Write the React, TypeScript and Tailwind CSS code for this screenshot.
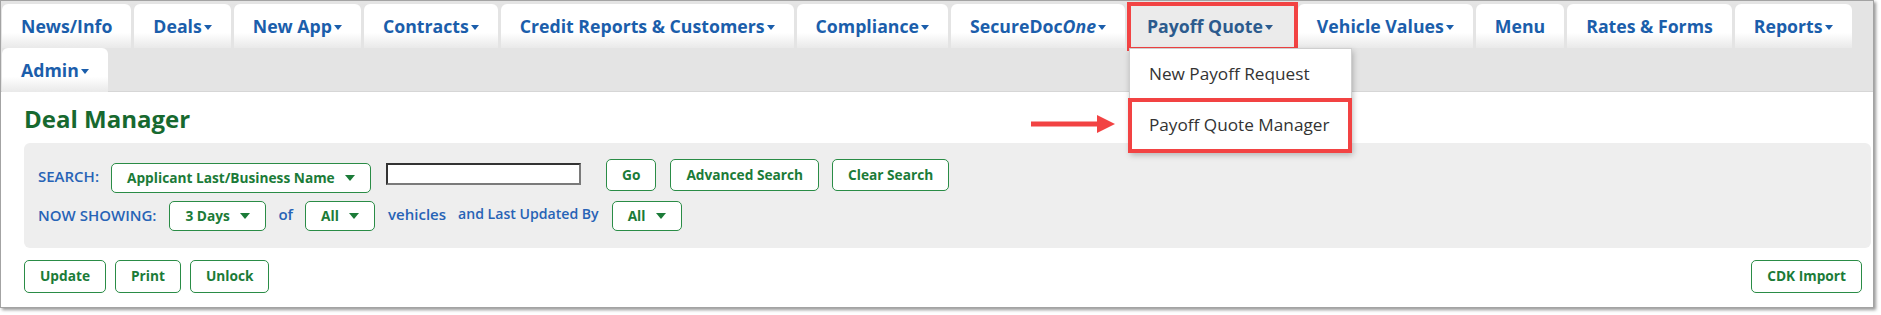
import React from 'react';

type Tab = {
  label: string;
  italic?: string;
  caret?: boolean;
  active?: boolean;
};

const tabs: Tab[] = [
  { label: 'News/Info' },
  { label: 'Deals', caret: true },
  { label: 'New App', caret: true },
  { label: 'Contracts', caret: true },
  { label: 'Credit Reports & Customers', caret: true },
  { label: 'Compliance', caret: true },
  { label: 'SecureDoc', italic: 'One', caret: true },
  { label: 'Payoff Quote', caret: true, active: true },
  { label: 'Vehicle Values', caret: true },
  { label: 'Menu' },
  { label: 'Rates & Forms' },
  { label: 'Reports', caret: true },
  { label: 'Admin', caret: true },
];

function TabCaret() {
  return (
    <span className="ml-[2px] mt-[3px] inline-block h-0 w-0 border-x-[4px] border-t-[5px] border-x-transparent border-t-current" />
  );
}

function SelectCaret() {
  return (
    <span className="inline-block h-0 w-0 border-x-[5px] border-t-[6px] border-x-transparent border-t-[#1b7b38]" />
  );
}

function PayoffMenu() {
  return (
    <>
      {/* red annotation around the open tab */}
      <div className="pointer-events-none absolute -left-[1px] -top-[2px] -right-[3px] -bottom-[3px] border-4 border-[#f24343]" />
      <div className="absolute left-[1px] top-[44px] z-20 w-[223px] border border-[#cfcfcf] bg-white shadow-[1px_3px_6px_rgba(0,0,0,0.25)]">
        <div className="flex h-[50px] items-center pl-[19px] text-[17.2px] font-normal text-[#333]">
          New Payoff Request
        </div>
        <div className="relative flex h-[52px] items-center pl-[19px] text-[17.2px] font-normal text-[#333]">
          Payoff Quote Manager
          <div className="pointer-events-none absolute -left-[2px] -right-[1px] -top-[1px] -bottom-[2px] border-4 border-[#f24343]" />
        </div>
      </div>
      {/* pointer arrow */}
      <svg
        className="absolute -left-[97px] top-[111px] z-20"
        width="84"
        height="18"
        viewBox="0 0 84 18"
      >
        <rect x="0" y="6.5" width="68" height="5" fill="#f24343" />
        <polygon points="66,0 84,9 66,18" fill="#f24343" />
      </svg>
    </>
  );
}

function NavTab({ tab }: { tab: Tab }) {
  return (
    <div
      className={
        tab.active
          ? 'relative flex h-[44px] items-center rounded-t-[6px] bg-[#ebebeb] pl-[19px] pr-[22px] text-[17.7px] font-bold text-[#2c5b8e]'
          : 'relative flex h-[44px] items-center rounded-t-[6px] bg-linear-to-b from-white from-65% to-[#e9e9e9] px-[19px] text-[17.7px] font-bold text-[#1b5eab]'
      }
    >
      <span>
        {tab.label}
        {tab.italic && <i>{tab.italic}</i>}
      </span>
      {tab.caret && <TabCaret />}
      {tab.active && <PayoffMenu />}
    </div>
  );
}

function Select({ label, width }: { label: string; width: string }) {
  return (
    <div
      className={`flex h-[30px] items-center justify-between rounded-[5px] border border-[#2a8c46] bg-white pl-[15px] pr-[15px] text-[13.7px] font-bold text-[#1b7b38] ${width}`}
    >
      <span>{label}</span>
      <SelectCaret />
    </div>
  );
}

function Btn({ children, className = '' }: { children: React.ReactNode; className?: string }) {
  return (
    <button
      className={`h-[32px] rounded-[5px] border border-[#2a8c46] bg-white px-[15px] text-[13.7px] font-bold text-[#1b7b38] ${className}`}
    >
      {children}
    </button>
  );
}

const label = 'text-[15px] leading-[20px] font-semibold text-[#2763b6]';

export default function App() {
  return (
    <div className="h-[315px] w-[1881px] overflow-hidden bg-white font-['Open_Sans',sans-serif]">
      <div className="flex h-[308px] w-[1874px] flex-col border border-[#a3a3a3] shadow-[2px_2px_3px_rgba(0,0,0,0.4)]">
        {/* top navigation */}
        <nav className="flex h-[91px] flex-wrap content-start gap-x-[3px] border-b border-[#d6d6d6] bg-[#e4e4e4] pl-[1px] pt-[3px]">
          {tabs.map((tab) => (
            <NavTab key={tab.label} tab={tab} />
          ))}
        </nav>

        <div className="flex-1 bg-white pl-[23px] pr-[2px] pt-[11px]">
          <h1 className="text-[24px] leading-[32px] font-bold text-[#17692f]">Deal Manager</h1>

          <div className="mt-[8px] h-[105px] rounded-[6px] bg-[#eeeeee] pl-[14px] pt-[16px]">
            <div className="flex h-[32px] items-start">
              <span className={`mt-[7px] ${label}`}>SEARCH:</span>
              <div className="ml-[12px] mt-[4px]">
                <Select label="Applicant Last/Business Name" width="w-[260px]" />
              </div>
              <input
                className="ml-[15px] mt-[4px] h-[22px] w-[195px] border-2 border-t-[#333] border-l-[#333] border-r-[#7a7a7a] border-b-[#7a7a7a] bg-white"
                type="text"
              />
              <Btn className="ml-[25px]">Go</Btn>
              <Btn className="ml-[14px]">Advanced Search</Btn>
              <Btn className="ml-[13px]">Clear Search</Btn>
            </div>

            <div className="mt-[10px] flex items-start">
              <span className={`mt-[4px] ${label}`}>NOW SHOWING:</span>
              <div className="ml-[13px]">
                <Select label="3 Days" width="w-[97px]" />
              </div>
              <span className={`ml-[12px] mt-[3px] ${label}`}>of</span>
              <div className="ml-[12px]">
                <Select label="All" width="w-[70px]" />
              </div>
              <span className={`ml-[13px] mt-[3px] ${label}`}>vehicles</span>
              <span className={`ml-[12px] mt-[3px] text-[14.1px] leading-[20px] font-semibold text-[#2763b6]`}>
                and Last Updated By
              </span>
              <div className="ml-[13px]">
                <Select label="All" width="w-[70px]" />
              </div>
            </div>
          </div>

          <div className="mt-[12px] flex justify-between pr-[9px]">
            <div className="flex gap-[9px]">
              <Btn className="h-[33px] px-[14px]">Update</Btn>
              <Btn className="h-[33px] px-[14px]">Print</Btn>
              <Btn className="h-[33px] px-[14px]">Unlock</Btn>
            </div>
            <Btn className="h-[33px]">CDK Import</Btn>
          </div>
        </div>
      </div>
    </div>
  );
}
